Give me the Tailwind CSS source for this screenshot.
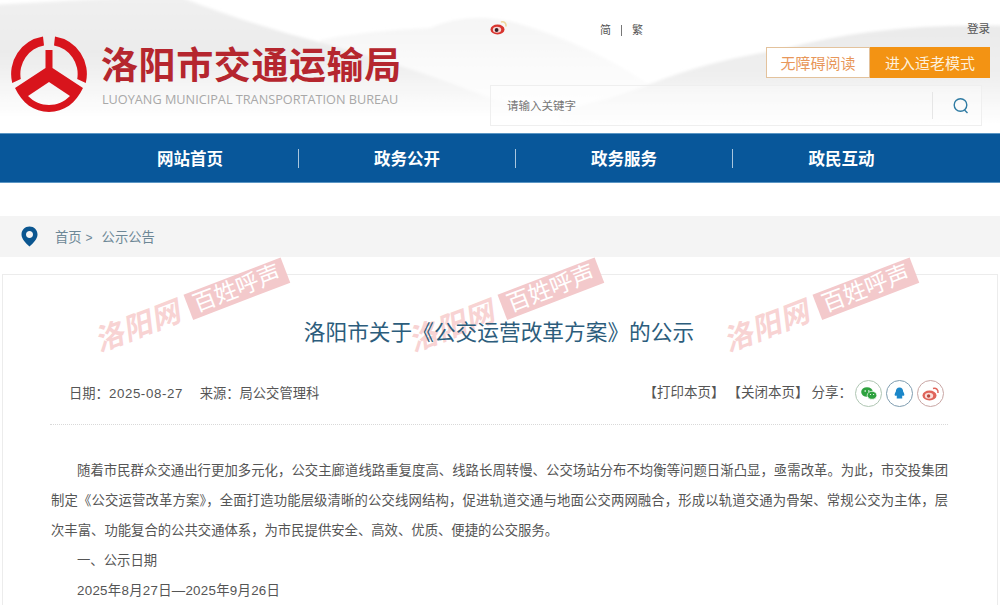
<!DOCTYPE html>
<html lang="zh-CN">
<head>
    <meta charset="UTF-8">
    <meta name="viewport" content="width=device-width, initial-scale=1.0">
    <title>洛阳市交通运输局</title>
    <script src="https://cdn.jsdelivr.net/npm/@tailwindcss/browser@4"></script>
</head>
<body class="bg-white font-['Liberation_Sans','Noto_Sans_CJK_SC',sans-serif]">
    <div class="relative w-[1000px] h-[605px] overflow-hidden bg-white">

        <!-- header -->
        <header class="relative h-[133px] overflow-hidden">
            <svg class="absolute inset-0" width="1000" height="133" viewBox="0 0 1000 133">
                <defs>
                    <linearGradient id="hillLeft" gradientUnits="userSpaceOnUse" x1="0" y1="0" x2="0" y2="118">
                        <stop offset="0" stop-color="#f0f0f0"/>
                        <stop offset="0.45" stop-color="#ebebeb"/>
                        <stop offset="1" stop-color="#ffffff"/>
                    </linearGradient>
                    <linearGradient id="hillPale" gradientUnits="userSpaceOnUse" x1="0" y1="10" x2="0" y2="110">
                        <stop offset="0" stop-color="#f4f4f4"/>
                        <stop offset="1" stop-color="#ffffff"/>
                    </linearGradient>
                    <linearGradient id="hillRight" gradientUnits="userSpaceOnUse" x1="0" y1="25" x2="0" y2="125">
                        <stop offset="0" stop-color="#eaeaea"/>
                        <stop offset="0.5" stop-color="#efefef"/>
                        <stop offset="1" stop-color="#ffffff"/>
                    </linearGradient>
                    <filter id="soft"><feGaussianBlur stdDeviation="1.5"/></filter>
                </defs>
                <g filter="url(#soft)">
                    <path d="M320 40 Q370 30 430 28 Q470 10 520 24 Q590 45 650 85 L650 133 L320 133 Z" fill="url(#hillPale)"/>
                    <path d="M-10 5 L175 -5 Q250 25 330 45 Q420 70 490 98 Q560 115 640 125 L640 133 L-10 133 Z" fill="url(#hillLeft)"/>
                    <path d="M560 110 Q610 100 650 84 Q710 60 780 50 Q880 22 1010 26 L1010 133 L560 133 Z" fill="url(#hillRight)"/>
                </g>
            </svg>

            <div class="relative flex justify-between h-full">
                <div class="flex items-start pl-[10px] pt-[35px]">
                    <svg width="78" height="78" viewBox="0 0 78 78">
                        <g fill="#d8141c">
                            <path d="M33 1.5 A38 38 0 0 0 2.2 48 L10.8 44 A29 29 0 0 1 34 10.4 Z"/>
                            <path d="M45 1.5 A38 38 0 0 1 75.8 48 L67.2 44 A29 29 0 0 0 44 10.4 Z"/>
                            <path fill-rule="evenodd" d="M35.5 15 L42.5 15 L42.5 33 L73 53 C66 68 54 77 39 77 C24 77 12 68 5 53 L35.5 33 Z M39 47 L18 61 C24 67 31 70 39 70 C47 70 54 67 60 61 Z"/>
                        </g>
                    </svg>
                    <div class="ml-[13px] mt-[9px] flex flex-col">
                        <div class="text-[37px] leading-[46px] font-bold text-[#b5262e] tracking-[0.6px] whitespace-nowrap">洛阳市交通运输局</div>
                        <div class="mt-[1px] ml-[1px] text-[12.7px] leading-[16px] text-[#a8a8a8] font-['Open_Sans'] whitespace-nowrap">LUOYANG MUNICIPAL TRANSPORTATION BUREAU</div>
                    </div>
                </div>

                <div class="w-[510px] pt-[21px] pr-[10px] flex flex-col items-end">
                    <div class="w-full flex items-center h-[18px] text-[11px] text-[#555]">
                        <svg class="-mt-[6px]" width="18" height="15" viewBox="0 0 18 15">
                            <ellipse cx="7.5" cy="9.5" rx="7" ry="5" fill="#d8342e"/>
                            <ellipse cx="7" cy="9.8" rx="4.2" ry="3" fill="#f6d5d5"/>
                            <circle cx="6.6" cy="10" r="1.9" fill="#3a2226"/>
                            <path d="M11 2 C14 1 16.5 3 16 6.5" fill="none" stroke="#f0d59a" stroke-width="1.6"/>
                        </svg>
                        <div class="ml-[92px] flex items-center">
                            <span>简</span>
                            <span class="mx-[10px] h-[11px] w-px bg-[#777]"></span>
                            <span>繁</span>
                        </div>
                        <span class="ml-auto text-[11.5px]">登录</span>
                    </div>
                    <div class="mt-[8px] flex h-[31px] text-[15px]">
                        <div class="w-[104px] pt-[3px] flex items-center justify-center bg-white border border-[#e3c29c] text-[#e8975a]">无障碍阅读</div>
                        <div class="w-[120px] pt-[3px] flex items-center justify-center bg-[#f39313] text-[#fdf0dc]">进入适老模式</div>
                    </div>
                    <div class="mt-[7px] w-[492px] h-[41px] mr-[8px] flex items-center border border-[#efefef] bg-white/30">
                        <span class="ml-[16px] pt-[2px] text-[11.5px] text-[#777]">请输入关键字</span>
                        <div class="ml-auto w-[49px] h-[27px] border-l border-[#e6e6e6] flex items-center justify-center pl-[8px] pt-[1px]">
                            <svg width="18" height="18" viewBox="0 0 18 18" fill="none" stroke="#2f7ba3" stroke-width="1.4">
                                <circle cx="8.5" cy="8" r="6.3"/>
                                <path d="M12.5 13 L15.5 16"/>
                            </svg>
                        </div>
                    </div>
                </div>
            </div>
        </header>

        <!-- nav -->
        <nav class="h-[50px] bg-[#08579a] border-y border-[#5b96c4] pl-[82px] flex items-center">
            <div class="w-[217px] text-center text-[16.5px] font-bold text-white border-r border-[#a9c6de] leading-[18px] pt-[1px]">网站首页</div>
            <div class="w-[217px] text-center text-[16.5px] font-bold text-white border-r border-[#a9c6de] leading-[18px] pt-[1px]">政务公开</div>
            <div class="w-[217px] text-center text-[16.5px] font-bold text-white border-r border-[#a9c6de] leading-[18px] pt-[1px]">政务服务</div>
            <div class="w-[217px] text-center text-[16.5px] font-bold text-white leading-[18px] pt-[1px]">政民互动</div>
        </nav>

        <!-- breadcrumb -->
        <div class="mt-[33px] h-[41px] bg-[#f4f4f4] flex items-center pl-[21px] text-[13.3px] text-[#6d8796]">
            <svg width="17" height="21" viewBox="0 0 17 21">
                <path fill-rule="evenodd" d="M8.5 0.5 C13 0.5 16.5 4 16.5 8.5 C16.5 13 12 17.5 8.5 20.5 C5 17.5 0.5 13 0.5 8.5 C0.5 4 4 0.5 8.5 0.5 Z M8.5 5 C6.5 5 5 6.5 5 8.5 C5 10.5 6.5 12 8.5 12 C10.5 12 12 10.5 12 8.5 C12 6.5 10.5 5 8.5 5 Z" fill="#0b5690"/>
            </svg>
            <span class="ml-[17px] pt-[2px]">首页</span>
            <span class="ml-[4px] pt-[2px] text-[12px]">&gt;</span>
            <span class="ml-[9px] pt-[2px]">公示公告</span>
        </div>

        <!-- article -->
        <main class="mt-[17px] ml-[2px] mr-[2px] h-[400px] border border-[#ececec]">
            <h1 class="relative z-10 mt-[42px] text-center text-[21.7px] leading-[32px] text-[#2c5d7c] pr-[2px]">洛阳市关于《公交运营改革方案》的公示</h1>

            <div class="mt-[29px] ml-[47px] mr-[49px] pb-[16px] border-b border-dotted border-[#d9d9d9] flex items-center justify-between text-[13px] text-[#555] h-[47px]">
                <div class="pl-[19px] pt-[2px] text-[13.3px]">
                    <span>日期：<span class="tracking-[0.6px]">2025-08-27</span></span>
                    <span class="ml-[13px]">来源：局公交管理科</span>
                </div>
                <div class="flex items-center pr-[4px] text-[13.5px]">
                    <span class="pt-[1px]">【打印本页】</span>
                    <span class="ml-[3px] pt-[1px]">【关闭本页】</span>
                    <span class="ml-[3px] pt-[1px]">分享：</span>
                    <div class="ml-[3px] w-[27px] h-[27px] rounded-full border border-[#afc6b3] flex items-center justify-center">
                        <svg width="16" height="13" viewBox="0 0 16 13" fill="#2ea23f">
                            <ellipse cx="6" cy="5" rx="5.8" ry="4.8"/>
                            <ellipse cx="11" cy="8.3" rx="4.8" ry="4" stroke="#fff" stroke-width="0.7"/>
                            <circle cx="4.2" cy="4" r="0.8" fill="#fff"/>
                            <circle cx="7.8" cy="4" r="0.8" fill="#fff"/>
                            <circle cx="9.5" cy="7.5" r="0.6" fill="#fff"/>
                            <circle cx="12.6" cy="7.5" r="0.6" fill="#fff"/>
                        </svg>
                    </div>
                    <div class="ml-[4px] w-[27px] h-[27px] rounded-full border border-[#7f9db0] flex items-center justify-center">
                        <svg width="11" height="12" viewBox="0 0 13 15" fill="#1b87c9" preserveAspectRatio="none">
                            <path d="M6.5 0.5 C9.5 0.5 10.8 3 10.8 5.5 C12 7.5 12.8 10 11.8 11 C11.3 11.3 10.8 10.8 10.4 10.2 C10.2 11.2 9.8 12 9.2 12.5 C10.3 13 10.3 14.5 8.5 14.5 L4.5 14.5 C2.7 14.5 2.7 13 3.8 12.5 C3.2 12 2.8 11.2 2.6 10.2 C2.2 10.8 1.7 11.3 1.2 11 C0.2 10 1 7.5 2.2 5.5 C2.2 3 3.5 0.5 6.5 0.5 Z"/>
                        </svg>
                    </div>
                    <div class="ml-[4px] w-[27px] h-[27px] rounded-full border border-[#c9a6a4] flex items-center justify-center">
                        <svg width="18" height="15" viewBox="0 0 18 15">
                            <ellipse cx="7.5" cy="9.5" rx="7" ry="5" fill="#e0645a"/>
                            <ellipse cx="7" cy="9.8" rx="4.2" ry="3" fill="#fbdcd8"/>
                            <circle cx="6.6" cy="10" r="1.7" fill="#b5493f"/>
                            <path d="M11 2.5 C14 1.5 16.5 3.5 16 7" fill="none" stroke="#e0645a" stroke-width="1.5"/>
                        </svg>
                    </div>
                </div>
            </div>

            <div class="mt-[31px] ml-[48px] mr-[49px] text-[13.35px] leading-[30px] text-[#555]">
                <p class="indent-[26px] text-justify">随着市民群众交通出行更加多元化，公交主廊道线路重复度高、线路长周转慢、公交场站分布不均衡等问题日渐凸显，亟需改革。为此，市交投集团制定《公交运营改革方案》，全面打造功能层级清晰的公交线网结构，促进轨道交通与地面公交两网融合，形成以轨道交通为骨架、常规公交为主体，层次丰富、功能复合的公共交通体系，为市民提供安全、高效、优质、便捷的公交服务。</p>
                <p class="indent-[26px]">一、公示日期</p>
                <p class="indent-[26px] tracking-[0.28px]">2025年8月27日—2025年9月26日</p>
            </div>
        </main>

        <!-- watermarks -->
        <div class="absolute left-[89px] top-[288px] w-[203px] flex items-center -rotate-[21deg] whitespace-nowrap">
            <span class="w-[99px] text-[29px] tracking-[1px] leading-[36px] font-bold italic text-[#f8d3d3]">洛阳网</span>
            <span class="w-[104px] h-[27px] bg-[#f3c9cb] text-white text-[23px] leading-[27px] text-center">百姓呼声</span>
        </div>
        <div class="absolute left-[403px] top-[288px] w-[203px] flex items-center -rotate-[21deg] whitespace-nowrap">
            <span class="w-[99px] text-[29px] tracking-[1px] leading-[36px] font-bold italic text-[#f8d3d3]">洛阳网</span>
            <span class="w-[104px] h-[27px] bg-[#f3c9cb] text-white text-[23px] leading-[27px] text-center">百姓呼声</span>
        </div>
        <div class="absolute left-[718px] top-[288px] w-[203px] flex items-center -rotate-[21deg] whitespace-nowrap">
            <span class="w-[99px] text-[29px] tracking-[1px] leading-[36px] font-bold italic text-[#f8d3d3]">洛阳网</span>
            <span class="w-[104px] h-[27px] bg-[#f3c9cb] text-white text-[23px] leading-[27px] text-center">百姓呼声</span>
        </div>
    </div>
</body>
</html>
